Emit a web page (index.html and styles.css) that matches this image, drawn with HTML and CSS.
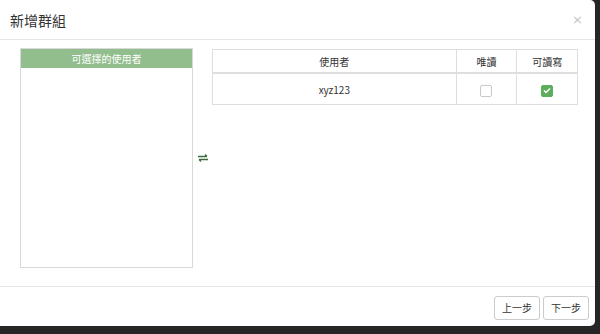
FILE: index.html
```html
<!DOCTYPE html>
<html lang="zh-Hant">
<head>
    <meta charset="UTF-8">
    <title>新增群組</title>
    <link rel="stylesheet" href="styles.css">
</head>
<body>
    <div class="modal">
        <div class="modal-header">
            <span class="modal-title">新增群組</span>
            <span class="close">&times;</span>
        </div>
        <div class="modal-body">
            <div class="user-pool">
                <div class="pool-head">可選擇的使用者</div>
            </div>
            <div class="swap">
                <svg width="10" height="8" viewBox="0 0 10 8">
                    <path d="M0 2.5h9M7 0.5l2 2" stroke="#3d6b3d" stroke-width="1.3" fill="none"/>
                    <path d="M10 5.5h-9M3 7.5l-2-2" stroke="#3d6b3d" stroke-width="1.3" fill="none"/>
                </svg>
            </div>
            <table class="perm-table">
                <thead>
                    <tr>
                        <th class="col-user">使用者</th>
                        <th class="col-ro">唯讀</th>
                        <th class="col-rw">可讀寫</th>
                    </tr>
                </thead>
                <tbody>
                    <tr>
                        <td>xyz123</td>
                        <td><span class="check"></span></td>
                        <td><span class="check checked">
                            <svg width="8" height="7" viewBox="0 0 8 7"><path d="M1 3.5l2 2 4-4" stroke="#fff" stroke-width="1.5" fill="none"/></svg>
                        </span></td>
                    </tr>
                </tbody>
            </table>
        </div>
        <div class="modal-footer">
            <button>上一步</button>
            <button>下一步</button>
        </div>
    </div>
</body>
</html>
```

FILE: styles.css
```css
body {
    margin: 0;
    background: #262626;
    font-family: "Noto Sans CJK TC", "Noto Sans", sans-serif;
    color: #333;
    height: 334px;
    overflow: hidden;
}

.modal {
    width: 595px;
    height: 326px;
    background: #fff;
    border-radius: 0 5px 5px 0;
    display: flex;
    flex-direction: column;
}

.modal-header {
    height: 39px;
    border-bottom: 1px solid #e5e5e5;
    display: flex;
    align-items: center;
    justify-content: space-between;
    padding: 0 10px 0 10px;
}

.modal-title {
    font-size: 14px;
    color: #333;
}

.close {
    font-family: "DejaVu Sans", sans-serif;
    font-size: 13px;
    color: #c4c4c4;
    margin-right: 2px;
}

.modal-body {
    flex: 1;
    display: flex;
    align-items: flex-start;
    padding: 8px 17px 0 20px;
}

.user-pool {
    width: 171px;
    height: 218px;
    border: 1px solid #d9d9d9;
}

.pool-head {
    background: #92be8e;
    color: #fff;
    font-size: 10px;
    text-align: center;
    height: 19px;
    line-height: 19px;
}

.swap {
    width: 19px;
    height: 220px;
    display: flex;
    align-items: center;
    justify-content: center;
}

.perm-table {
    width: 366px;
    border-collapse: collapse;
    margin-top: 1px;
    font-size: 10px;
}

.perm-table th,
.perm-table td {
    border: 1px solid #dedede;
    text-align: center;
    font-weight: normal;
    padding: 0;
}

.perm-table th {
    height: 22px;
    border-bottom-width: 2px;
}

.perm-table td {
    height: 30px;
}

.col-user { width: 244px; }
.col-ro { width: 60px; }
.col-rw { width: 60px; }

.check {
    display: inline-block;
    width: 10px;
    height: 10px;
    border: 1px solid #c8c8c8;
    border-radius: 2px;
    vertical-align: middle;
}

.check.checked {
    background: #5cae5c;
    border-color: #5cae5c;
    display: inline-flex;
    align-items: center;
    justify-content: center;
}

.modal-footer {
    height: 39px;
    border-top: 1px solid #e5e5e5;
    display: flex;
    justify-content: flex-end;
    align-items: center;
    gap: 3px;
    padding-right: 6px;
}

button {
    font-family: "Noto Sans CJK TC", sans-serif;
    font-size: 10px;
    color: #333;
    background: #fff;
    border: 1px solid #ccc;
    border-radius: 3px;
    height: 24px;
    width: 46px;
    padding: 0;
    margin-top: 2px;
}
```
